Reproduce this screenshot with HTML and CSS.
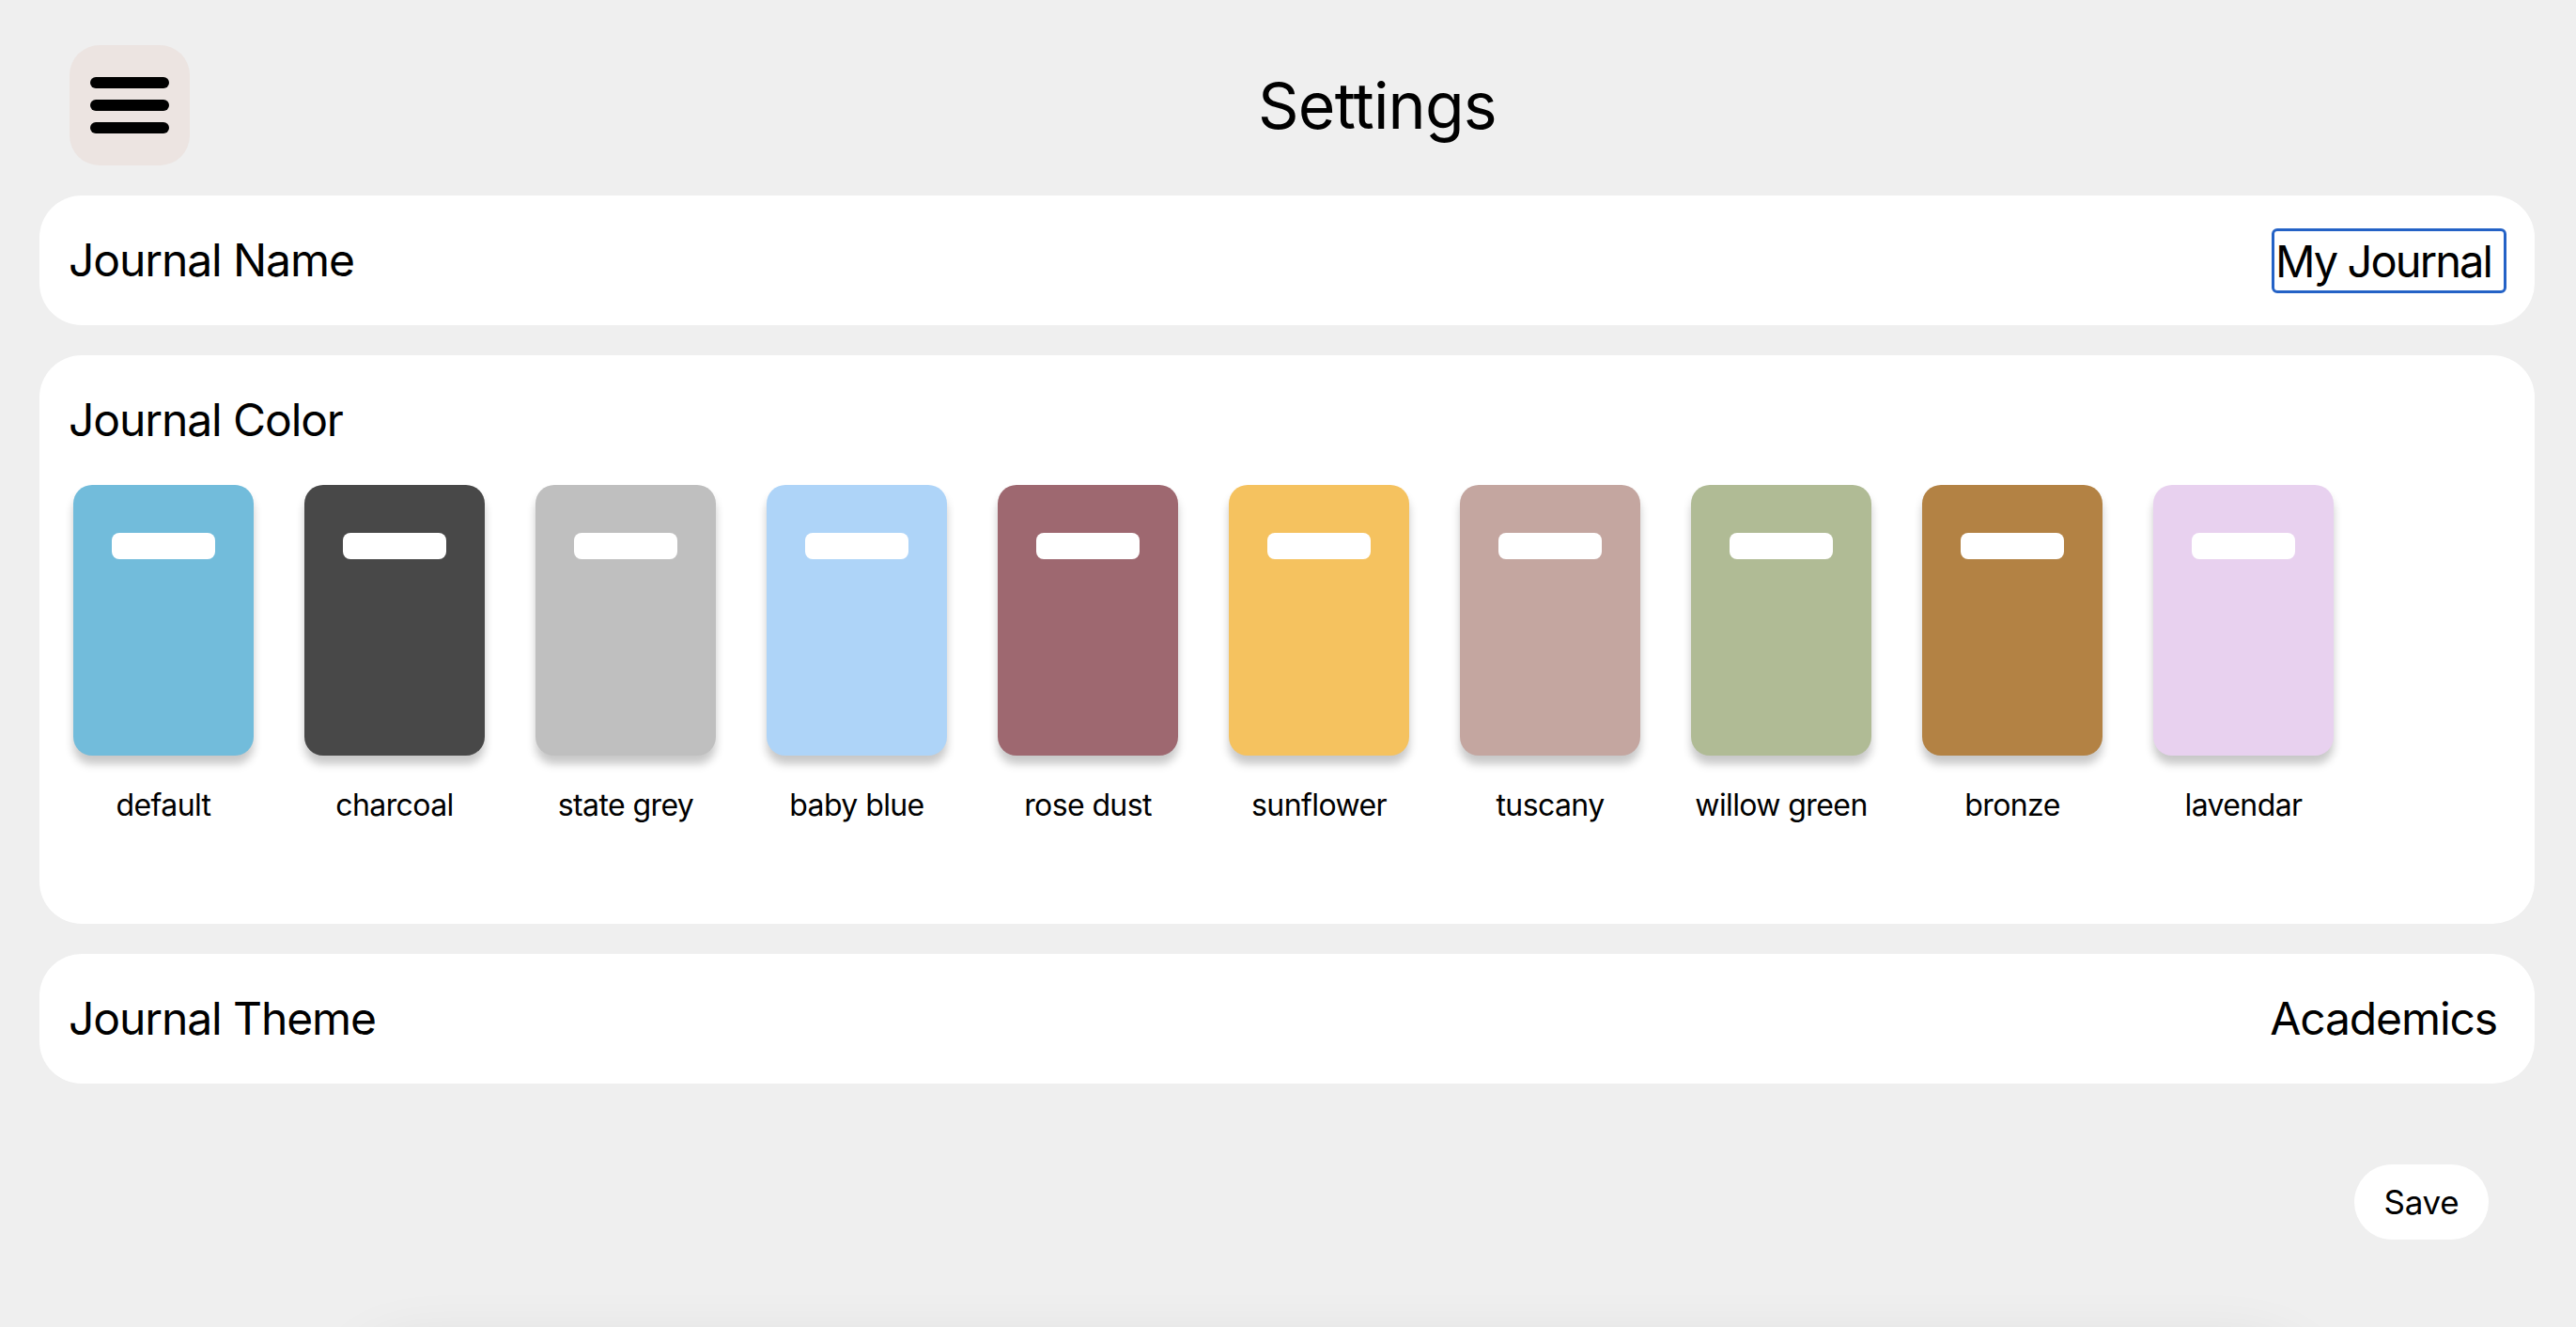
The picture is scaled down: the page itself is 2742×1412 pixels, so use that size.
FILE: index.html
```html
<!DOCTYPE html>
<html lang="en">
<head>
<meta charset="utf-8">
<title>Settings</title>
<link rel="stylesheet" href="styles.css">
</head>
<body>
<div class="page">
  <header class="topbar">
    <button class="menu-btn" aria-label="Menu">
      <span class="bar"></span>
      <span class="bar"></span>
      <span class="bar"></span>
    </button>
    <h1 class="title">Settings</h1>
  </header>

  <section class="card row-card">
    <span class="label">Journal Name</span>
    <input class="name-input" type="text" value="My Journal">
  </section>

  <section class="card color-card">
    <h2 class="label color-title">Journal Color</h2>
    <div class="swatches">
      <div class="swatch-item"><div class="swatch c-default"><span class="tab"></span></div><span class="swatch-label">default</span></div>
      <div class="swatch-item"><div class="swatch c-charcoal"><span class="tab"></span></div><span class="swatch-label">charcoal</span></div>
      <div class="swatch-item"><div class="swatch c-grey"><span class="tab"></span></div><span class="swatch-label">state grey</span></div>
      <div class="swatch-item"><div class="swatch c-babyblue"><span class="tab"></span></div><span class="swatch-label">baby blue</span></div>
      <div class="swatch-item"><div class="swatch c-rose"><span class="tab"></span></div><span class="swatch-label">rose dust</span></div>
      <div class="swatch-item"><div class="swatch c-sun"><span class="tab"></span></div><span class="swatch-label">sunflower</span></div>
      <div class="swatch-item"><div class="swatch c-tuscany"><span class="tab"></span></div><span class="swatch-label">tuscany</span></div>
      <div class="swatch-item"><div class="swatch c-willow"><span class="tab"></span></div><span class="swatch-label">willow green</span></div>
      <div class="swatch-item"><div class="swatch c-bronze"><span class="tab"></span></div><span class="swatch-label">bronze</span></div>
      <div class="swatch-item"><div class="swatch c-lavender"><span class="tab"></span></div><span class="swatch-label">lavendar</span></div>
    </div>
  </section>

  <section class="card row-card theme-card">
    <span class="label">Journal Theme</span>
    <span class="label">Academics</span>
  </section>

  <div class="actions">
    <button class="save-btn">Save</button>
  </div>
</div>
<div class="bottom-sheet"></div>
</body>
</html>
```

FILE: styles.css
```css
* {
  box-sizing: border-box;
}

html, body {
  margin: 0;
  padding: 0;
  background: #efefef;
  overflow: hidden;
}

body {
  font-family: Inter, "Noto Sans", "Liberation Sans", sans-serif;
  color: #000;
  height: 1412px;
}

.page {
  padding: 48px 44px 0 42px;
  display: flex;
  flex-direction: column;
}

.topbar {
  display: flex;
  align-items: center;
  height: 128px;
  padding-left: 32px;
}

.menu-btn {
  width: 128px;
  height: 128px;
  border: none;
  border-radius: 32px;
  background: #ece4e1;
  display: flex;
  flex-direction: column;
  align-items: center;
  justify-content: center;
  gap: 12px;
  padding: 0;
  flex-shrink: 0;
}

.bar {
  display: block;
  width: 84px;
  height: 12px;
  border-radius: 6px;
  background: #000;
}

.title {
  flex: 1;
  margin: 0;
  padding-left: 32px;
  text-align: center;
  font-size: 68px;
  font-weight: 400;
  line-height: 80px;
  letter-spacing: -0.8px;
}

.card {
  background: #fff;
  border-radius: 45px;
  margin-top: 32px;
}

.row-card {
  height: 138px;
  display: flex;
  align-items: center;
  justify-content: space-between;
  padding: 0 30px 0 31px;
}

.label {
  font-size: 48px;
  font-weight: 400;
  line-height: 58px;
  letter-spacing: -1.1px;
}

.name-input {
  width: 250px;
  height: 69px;
  border: 3px solid #2462c6;
  border-radius: 6px;
  padding: 0 0 0 1px;
  font-family: inherit;
  font-size: 47px;
  letter-spacing: -1.9px;
  color: #000;
  background: #fff;
  outline: none;
}

.color-card {
  padding: 40px 30px 106px 31px;
}

.color-title {
  margin: 0;
  display: block;
}

.swatches {
  display: flex;
  gap: 54px;
  margin-top: 40px;
  padding-left: 5px;
}

.swatch-item {
  width: 192px;
  display: flex;
  flex-direction: column;
  align-items: center;
}

.swatch {
  width: 192px;
  height: 288px;
  border-radius: 20px;
  display: flex;
  justify-content: center;
  padding-top: 51px;
  box-shadow: 0 9px 10px rgba(0, 0, 0, 0.22);
}

.tab {
  display: block;
  width: 110px;
  height: 28px;
  border-radius: 8px;
  background: #fff;
}

.swatch-label {
  margin-top: 33px;
  font-size: 32px;
  line-height: 40px;
  white-space: nowrap;
  letter-spacing: -0.6px;
}

.c-default { background: #72bcdb; }
.c-charcoal { background: #484848; }
.c-grey { background: #bfbfbf; }
.c-babyblue { background: #aed4f8; }
.c-rose { background: #9e6870; }
.c-sun { background: #f5c25f; }
.c-tuscany { background: #c4a6a0; }
.c-willow { background: #b0bb95; }
.c-bronze { background: #b38244; }
.c-lavender { background: #e8d1ef; }

.theme-card {
  padding-right: 40px;
}

.actions {
  display: flex;
  justify-content: flex-end;
  margin-top: 86px;
  padding-right: 49px;
}

.save-btn {
  height: 80px;
  width: 143px;
  border: none;
  border-radius: 40px;
  background: #fff;
  font-family: inherit;
  font-size: 35px;
  color: #000;
  letter-spacing: -0.3px;
  padding: 0;
}

.bottom-sheet {
  position: fixed;
  left: 380px;
  right: 290px;
  top: 1440px;
  height: 120px;
  border-radius: 60px;
  background: #efefef;
  box-shadow: 0 0 70px rgba(0, 0, 0, 0.12);
}
```
